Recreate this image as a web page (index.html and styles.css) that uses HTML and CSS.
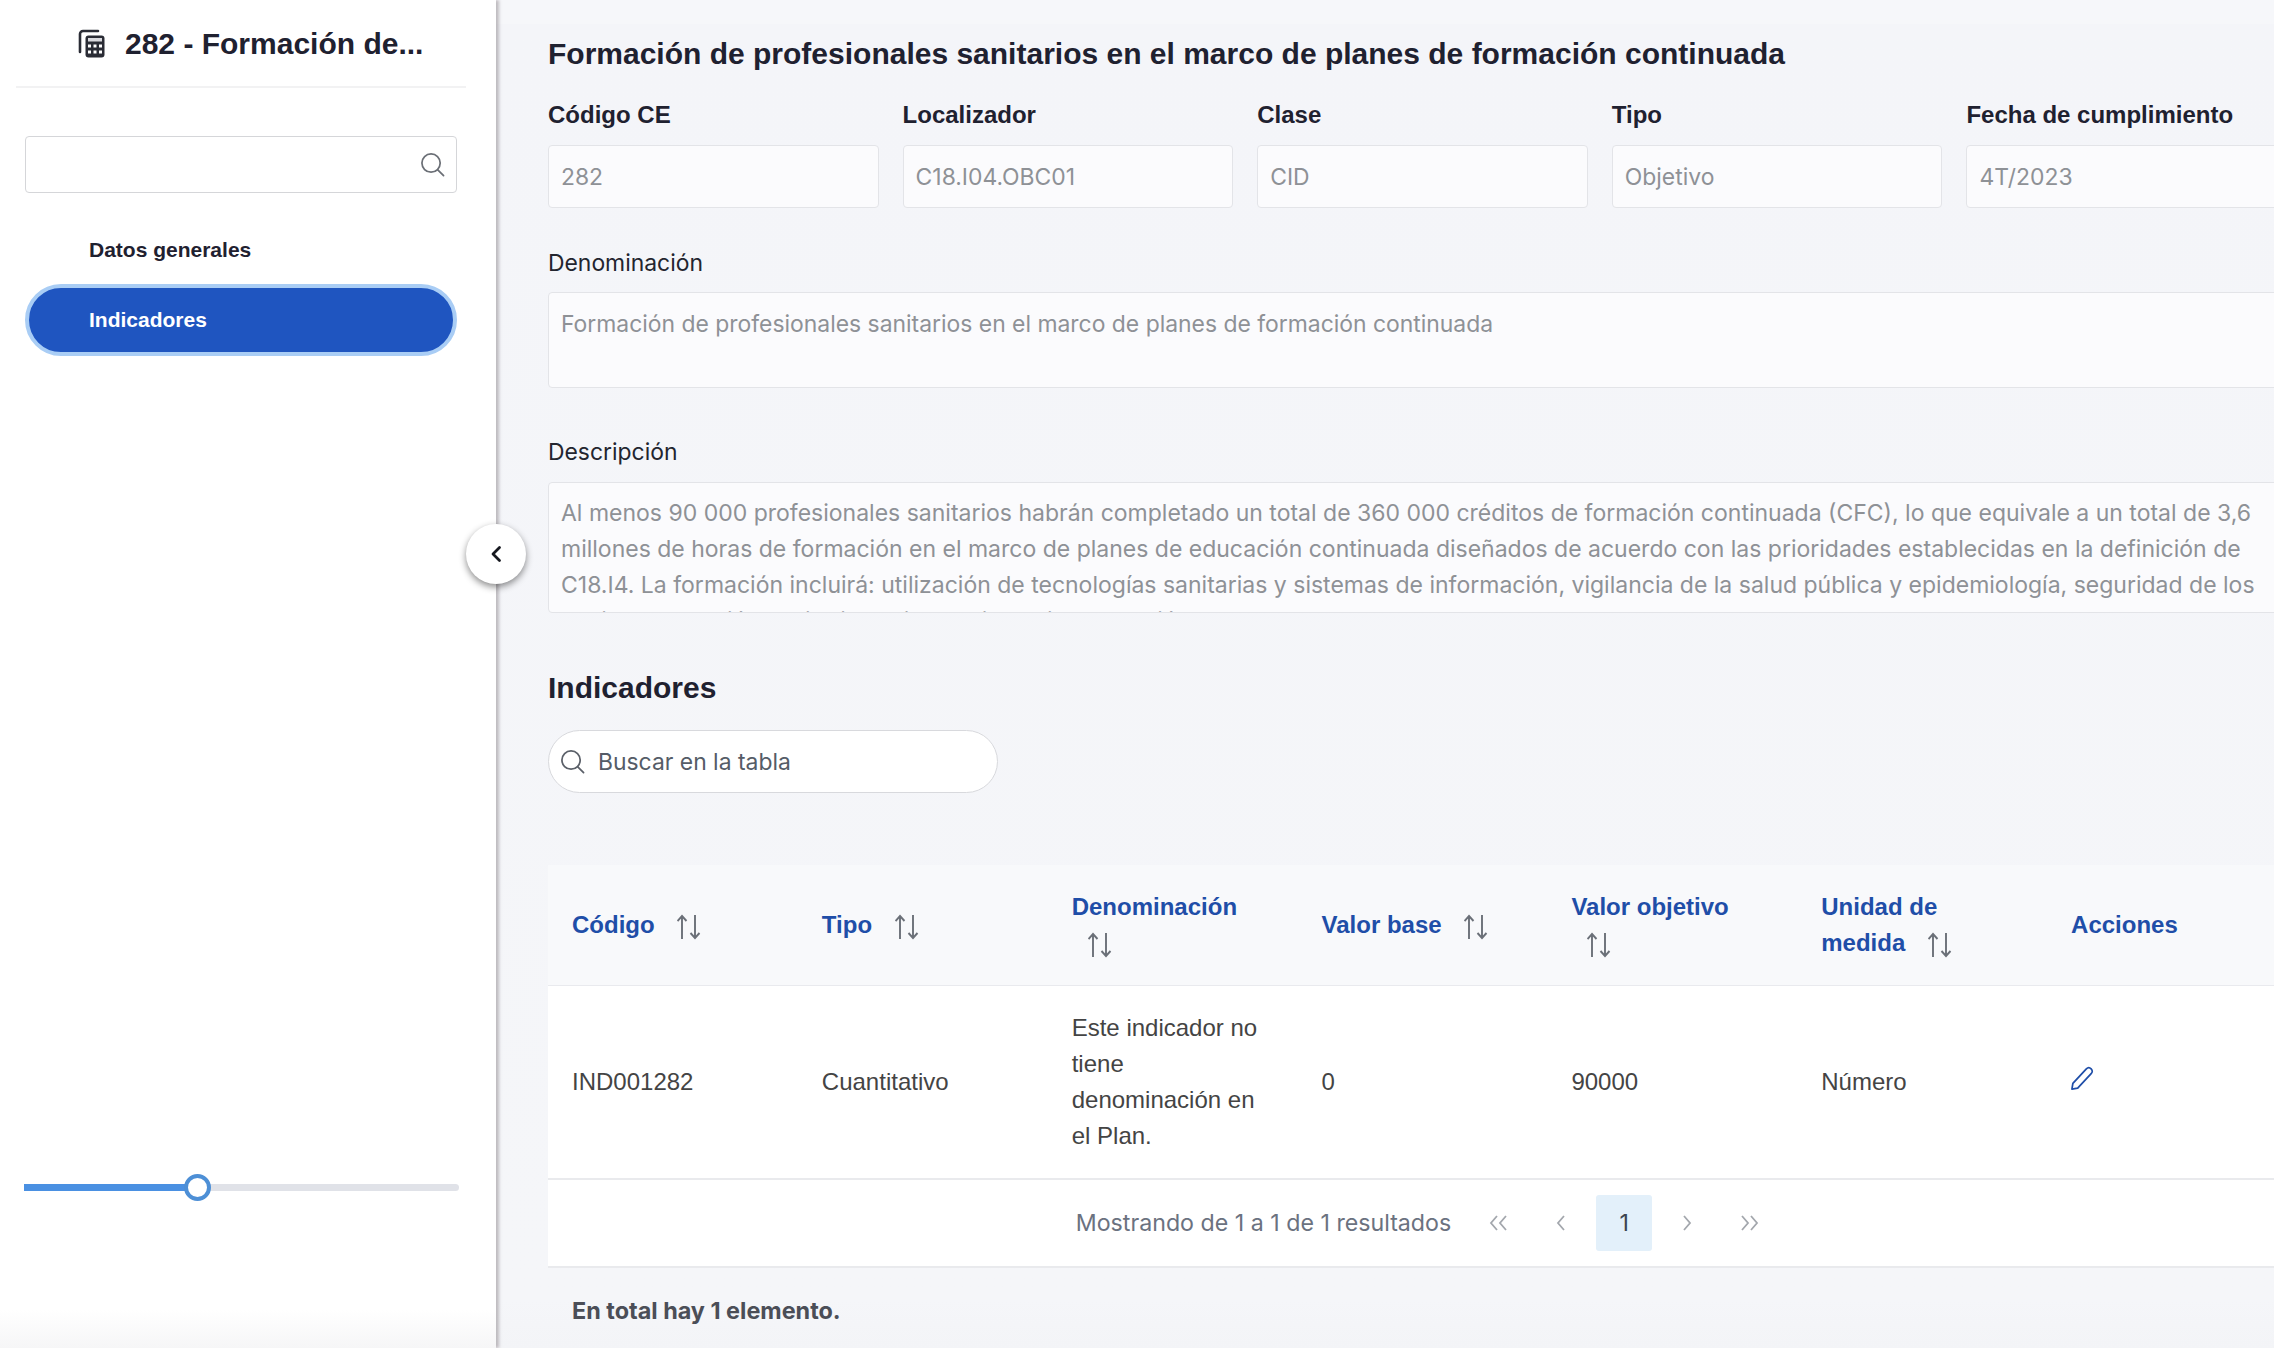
FILE: index.html
```html
<!DOCTYPE html>
<html lang="es">
<head>
    <meta charset="UTF-8">
    <title>282 - Formación de profesionales sanitarios</title>
    <link rel="stylesheet" href="styles.css">
</head>
<body>
    <div class="layout">
        <aside class="sidebar">
            <div class="side-title">
                <svg class="calc-icon" viewBox="0 0 28 30" fill="none">
                    <path d="M2 23V5a3 3 0 0 1 3-3h15" stroke="#2a2c35" stroke-width="2.6" stroke-linecap="round"/>
                    <rect x="7.500" y="6.500" width="19" height="22" rx="3" fill="#2a2c35"/>
                    <rect x="10" y="9" width="14" height="3.500" fill="#d9d9de"/>
                    <g fill="#fff">
                        <rect x="10" y="15.500" width="3" height="3"/>
                        <rect x="15.500" y="15.500" width="3" height="3"/>
                        <rect x="21" y="15.500" width="3" height="3"/>
                        <rect x="10" y="21.500" width="3" height="3"/>
                        <rect x="15.500" y="21.500" width="3" height="3"/>
                        <rect x="21" y="21.500" width="3" height="3"/>
                    </g>
                </svg>
                <span>282 - Formación de...</span>
            </div>
            <div class="side-search">
                <svg class="search-icon" viewBox="0 0 26 26" fill="none" stroke="#6b6f76" stroke-width="1.8">
                    <circle cx="11.500" cy="11.500" r="9.500"/>
                    <path d="M18.500 18.500l6 6" stroke-linecap="round"/>
                </svg>
            </div>
            <nav class="side-nav">
                <a class="nav-item">Datos generales</a>
                <a class="nav-item active">Indicadores</a>
            </nav>
            <div class="slider">
                <div class="slider-fill"></div>
                <div class="slider-thumb"></div>
            </div>
            <button class="collapse-btn" aria-label="Contraer">
                <svg viewBox="0 0 12 18" width="12" height="18" fill="none" stroke="#16181f" stroke-width="2.8" stroke-linecap="round" stroke-linejoin="round">
                    <path d="M9.500 2.500L3 9l6.500 6.500"/>
                </svg>
            </button>
        </aside>

        <main class="main">
            <div class="content">
                <h1 class="page-title">Formación de profesionales sanitarios en el marco de planes de formación continuada</h1>

                <div class="fields">
                    <div class="field">
                        <label class="label-bold">Código CE</label>
                        <div class="input">282</div>
                    </div>
                    <div class="field">
                        <label class="label-bold">Localizador</label>
                        <div class="input">C18.I04.OBC01</div>
                    </div>
                    <div class="field">
                        <label class="label-bold">Clase</label>
                        <div class="input">CID</div>
                    </div>
                    <div class="field">
                        <label class="label-bold">Tipo</label>
                        <div class="input">Objetivo</div>
                    </div>
                    <div class="field">
                        <label class="label-bold">Fecha de cumplimiento</label>
                        <div class="input">4T/2023</div>
                    </div>
                </div>

                <div class="block block-name">
                    <label class="label">Denominación</label>
                    <div class="textbox textbox-name">Formación de profesionales sanitarios en el marco de planes de formación continuada</div>
                </div>

                <div class="block block-desc">
                    <label class="label">Descripción</label>
                    <div class="textbox textbox-desc">Al menos 90 000 profesionales sanitarios habrán completado un total de 360 000 créditos de formación continuada (CFC), lo que equivale a un total de 3,6 millones de horas de formación en el marco de planes de educación continuada diseñados de acuerdo con las prioridades establecidas en la definición de C18.I4. La formación incluirá: utilización de tecnologías sanitarias y sistemas de información, vigilancia de la salud pública y epidemiología, seguridad de los pacientes, gestión sanitaria, calidad asistencial y atención centrada en las personas, entre otros.</div>
                </div>

                <h2 class="section-title">Indicadores</h2>

                <div class="table-search">
                    <svg class="search-icon" viewBox="0 0 26 26" fill="none" stroke="#5b6069" stroke-width="1.8">
                        <circle cx="11.500" cy="11.500" r="9.500"/>
                        <path d="M18.500 18.500l6 6" stroke-linecap="round"/>
                    </svg>
                    <span>Buscar en la tabla</span>
                </div>

                <table class="table">
                    <thead>
                        <tr>
                            <th>Código <svg class="sort"><use href="#sort"/></svg></th>
                            <th>Tipo <svg class="sort"><use href="#sort"/></svg></th>
                            <th>Denominación <svg class="sort"><use href="#sort"/></svg></th>
                            <th>Valor base <svg class="sort"><use href="#sort"/></svg></th>
                            <th>Valor objetivo <svg class="sort"><use href="#sort"/></svg></th>
                            <th>Unidad de medida <svg class="sort"><use href="#sort"/></svg></th>
                            <th>Acciones</th>
                        </tr>
                    </thead>
                    <tbody>
                        <tr>
                            <td>IND001282</td>
                            <td>Cuantitativo</td>
                            <td>Este indicador no tiene denominación en el Plan.</td>
                            <td>0</td>
                            <td>90000</td>
                            <td>Número</td>
                            <td>
                                <svg class="edit" viewBox="0 0 26 26" fill="none" stroke="#1f4ea8" stroke-width="1.8" stroke-linejoin="round">
                                    <path d="M2 24l1-6L17 3c1.500-1.500 3.500-1.500 5 0s1.500 3.500 0 5L8 23z"/>
                                </svg>
                            </td>
                        </tr>
                    </tbody>
                </table>

                <div class="pager">
                    <span class="pager-text">Mostrando de 1 a 1 de 1 resultados</span>
                    <svg class="pager-icon"><path d="M8 1L2 8l6 7M17 1l-6 7 6 7"/></svg>
                    <svg class="pager-icon"><path d="M12 1L6 8l6 7"/></svg>
                    <span class="pager-page">1</span>
                    <svg class="pager-icon"><path d="M7 1l6 7-6 7"/></svg>
                    <svg class="pager-icon"><path d="M2 1l6 7-6 7M11 1l6 7-6 7"/></svg>
                </div>

                <p class="total">En total hay 1 elemento.</p>
            </div>
        </main>
    </div>

    <svg class="defs" width="0" height="0">
        <symbol id="sort" viewBox="0 0 24 26">
            <path d="M5 25V2M0.500 7L5 2l4.500 5M18 1v23M13.500 19l4.500 5 4.500-5" fill="none" stroke="#6b7078" stroke-width="1.9"/>
        </symbol>
    </svg>
</body>
</html>
```

FILE: styles.css
```css
* {
    box-sizing: border-box;
}
html, body {
    margin: 0;
    height: 100%;
    overflow: hidden;
}
body {
    font-family: Inter, "Liberation Sans", sans-serif;
    font-size: 22.9px;
    color: #1f2130;
    background-color: #f4f5f9;
}
.layout {
    display: flex;
    height: 100vh;
}
.defs {
    position: absolute;
}

/* sidebar */
.sidebar {
    position: relative;
    flex: 0 0 496px;
    display: flex;
    flex-direction: column;
    padding: 0 30px 0 16px;
    background: linear-gradient(to bottom, #fff 1310px, #f6f6f7 100%);
    box-shadow: 3px 0 3px rgba(110, 100, 105, 0.4);
    z-index: 2;
}
.side-title {
    display: flex;
    align-items: center;
    gap: 19px;
    height: 88px;
    padding-left: 62px;
    padding-top: 2px;
    border-bottom: 2px solid #f2f2f3;
    font-family: "Liberation Sans", Arial, sans-serif;
    font-size: 30px;
    font-weight: 700;
    color: #1f2130;
}
.calc-icon {
    width: 28px;
    height: 30px;
}
.side-search {
    display: flex;
    align-items: center;
    justify-content: flex-end;
    height: 57px;
    margin: 48px 9px 0;
    padding-right: 11px;
    background-color: #fff;
    border: 1px solid #d5d6d9;
    border-radius: 4px;
}
.search-icon {
    width: 25px;
    height: 25px;
}
.side-nav {
    display: flex;
    flex-direction: column;
    margin: 22px 9px 0;
}
.nav-item {
    display: flex;
    align-items: center;
    height: 70px;
    padding-left: 64px;
    font-family: "Liberation Sans", Arial, sans-serif;
    font-size: 21px;
    font-weight: 700;
    color: #1f2130;
}
.nav-item.active {
    height: 72px;
    margin-top: -1px;
    color: #fff;
    background-color: #1f55c0;
    border: 4px solid #a9cdf5;
    border-radius: 36px;
    padding-left: 60px;
}
.slider {
    position: relative;
    height: 7px;
    margin: 828px 7px 0 8px;
    background-color: #e0e2e8;
    border-radius: 4px;
}
.slider-fill {
    width: 173px;
    height: 100%;
    background-color: #4a90e2;
}
.slider-thumb {
    position: absolute;
    left: 160px;
    top: -10px;
    width: 27px;
    height: 27px;
    background-color: #fff;
    border: 4px solid #4d8fd6;
    border-radius: 50%;
}
.collapse-btn {
    position: absolute;
    top: 524px;
    right: -30px;
    display: flex;
    align-items: center;
    justify-content: center;
    width: 60px;
    height: 60px;
    padding: 0;
    background-color: #fff;
    border: none;
    border-radius: 50%;
    box-shadow: 0 3px 7px rgba(0, 0, 0, 0.45);
}

/* main */
.main {
    flex: 1;
    min-width: 0;
    overflow: hidden;
    padding-left: 52px;
    background: linear-gradient(to bottom, #f6f7fa 24px, #f4f5f9 24px, #f5f6f9 1300px, #f3f4f7 100%);
}
.content {
    width: 1749px;
}
.page-title {
    margin: 0;
    padding-top: 35px;
    font-family: "Liberation Sans", Arial, sans-serif;
    font-size: 30px;
    line-height: 38px;
    font-weight: 700;
    color: #1f2130;
}
.fields {
    display: grid;
    grid-template-columns: repeat(5, 1fr);
    gap: 24px;
    margin-top: 26px;
}
.field label {
    display: block;
}
.label-bold {
    font-family: "Liberation Sans", Arial, sans-serif;
    font-size: 24px;
    line-height: 32px;
    font-weight: 700;
}
.label {
    display: block;
    line-height: 32px;
    color: #23252f;
}
.input,
.textbox {
    background-color: #fbfbfd;
    border: 1px solid #e3e4e8;
    border-radius: 4px;
    color: #8e9196;
    padding: 0 12px;
}
.input {
    display: flex;
    align-items: center;
    height: 63px;
    margin-top: 14px;
}
.block-name {
    margin-top: 39px;
}
.block-desc {
    margin-top: 48px;
}
.textbox {
    margin-top: 13px;
    line-height: 36px;
    overflow: hidden;
}
.textbox-name {
    height: 96px;
    padding-top: 13px;
}
.block-desc .textbox {
    margin-top: 14px;
}
.textbox-desc {
    height: 131px;
    padding-top: 12px;
    font-size: 23px;
}
.section-title {
    margin: 57px 0 0;
    font-family: "Liberation Sans", Arial, sans-serif;
    font-size: 30px;
    line-height: 36px;
    font-weight: 700;
}
.table-search {
    display: flex;
    align-items: center;
    gap: 13px;
    width: 450px;
    height: 63px;
    margin-top: 24px;
    padding-left: 11px;
    background-color: #fff;
    border: 1px solid #d8d9dd;
    border-radius: 32px;
    color: #555c67;
}

/* table */
.table {
    width: 100%;
    margin-top: 72px;
    border-collapse: collapse;
    table-layout: fixed;
    font-family: "Liberation Sans", Arial, sans-serif;
}
.table th {
    padding: 24px;
    background-color: #f8f9fb;
    border-bottom: 1px solid #e9eaee;
    text-align: left;
    font-size: 24px;
    line-height: 36px;
    font-weight: 700;
    color: #1f4ea8;
}
.table td {
    padding: 24px;
    background-color: #fff;
    font-size: 24px;
    line-height: 36px;
    color: #444;
}
.sort {
    display: inline-block;
    width: 24px;
    height: 26px;
    margin-left: 16px;
    vertical-align: middle;
}
.edit {
    display: block;
    width: 25px;
    height: 25px;
    margin: -8px 0 0 -1px;
}
.pager {
    display: flex;
    align-items: center;
    justify-content: center;
    height: 90px;
    padding-left: 12px;
    background-color: #fff;
    border-top: 2px solid #e9eaed;
    border-bottom: 2px solid #e9eaed;
    color: #6b7280;
    font-size: 23.2px;
}
.pager-text {
    margin-right: 16px;
}
.pager-icon {
    width: 19px;
    height: 16px;
    margin: 0 22px;
    fill: none;
    stroke: #a3a7ad;
    stroke-width: 1.8;
}
.pager-page {
    display: flex;
    align-items: center;
    justify-content: center;
    width: 56px;
    height: 56px;
    margin: 0 3px;
    background-color: #e3f0fa;
    border-radius: 3px;
    color: #3d4450;
}
.total {
    margin: 27px 0 0 24px;
    font-size: 23.4px;
    line-height: 32px;
    font-weight: 700;
    color: #4b4e57;
}
```
